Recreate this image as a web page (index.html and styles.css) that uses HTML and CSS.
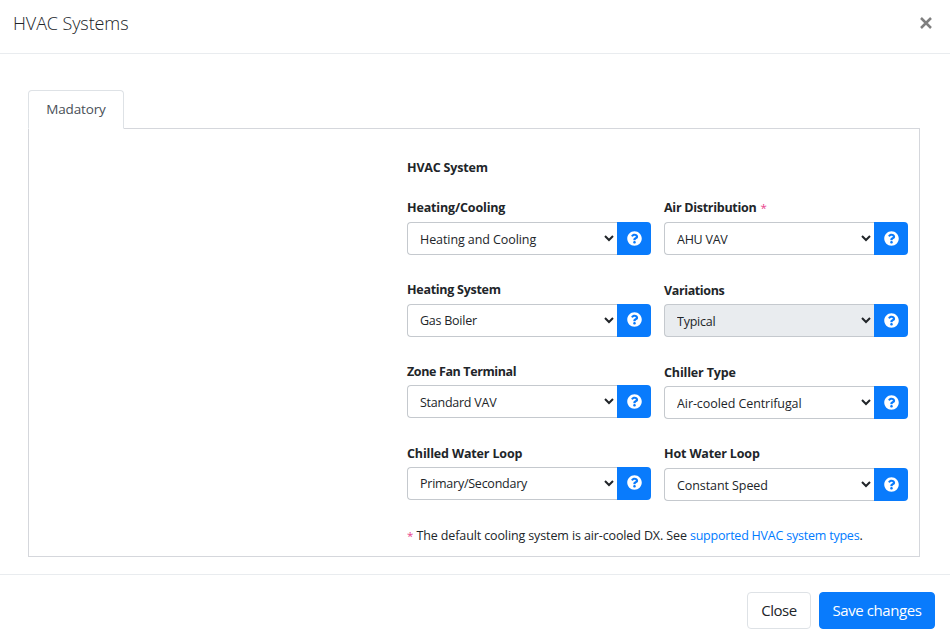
FILE: index.html
```html
<!DOCTYPE html>
<html lang="en">
<head>
<meta charset="utf-8">
<title>HVAC Systems</title>
<link rel="stylesheet" href="styles.css">
</head>
<body>
<svg class="sprite" aria-hidden="true">
  <symbol id="help" viewBox="0 0 512 512"><path d="M504 256c0 137-111 248-248 248S8 393 8 256C8 119.100 119 8 256 8s248 111.100 248 248zM262.700 90c-54.500 0-89.300 23-116.500 63.800-3.500 5.300-2.400 12.400 2.700 16.300l34.700 26.300c5.200 3.900 12.600 3 16.700-2.100 17.900-22.700 30.100-35.800 57.300-35.800 20.400 0 45.700 13.100 45.700 33 0 15-12.400 22.700-32.500 34C247.100 238.500 216 254.900 216 296v4c0 6.600 5.400 12 12 12h56c6.600 0 12-5.400 12-12v-1.300c0-28.500 83.200-29.600 83.200-106.700 0-58-60.200-102-116.500-102zM256 338c-25.400 0-46 20.600-46 46s20.600 46 46 46 46-20.600 46-46-20.600-46-46-46z"/></symbol>
</svg>
<div class="modal">
  <header class="modal-header">
    <h1 class="title">HVAC Systems</h1>
    <button class="dismiss" aria-label="Close"><svg viewBox="0 0 12 12"><path d="M1 1l10 10M11 1l-10 10"/></svg></button>
  </header>
  <main class="modal-body">
    <nav class="tabs"><a class="tab">Madatory</a></nav>
    <section class="panel">
      <div class="form">
        <h2 class="heading">HVAC System</h2>
        <div class="columns">
          <div class="column left">
            <div class="field"><label class="label loose">Heating/Cooling</label><div class="group"><select class="select wide"><option>Heating and Cooling</option></select><button class="help"><svg><use href="#help"/></svg></button></div></div>
            <div class="field"><label class="label">Heating System</label><div class="group"><select class="select"><option>Gas Boiler</option></select><button class="help"><svg><use href="#help"/></svg></button></div></div>
            <div class="field"><label class="label tight">Zone Fan Terminal</label><div class="group"><select class="select"><option>Standard VAV</option></select><button class="help"><svg><use href="#help"/></svg></button></div></div>
            <div class="field"><label class="label loose">Chilled Water Loop</label><div class="group"><select class="select"><option>Primary/Secondary</option></select><button class="help"><svg><use href="#help"/></svg></button></div></div>
          </div>
          <div class="column right">
            <div class="field"><label class="label">Air Distribution <span class="star">*</span></label><div class="group"><select class="select"><option>AHU VAV</option></select><button class="help"><svg><use href="#help"/></svg></button></div></div>
            <div class="field"><label class="label tight">Variations</label><div class="group"><select class="select muted"><option>Typical</option></select><button class="help"><svg><use href="#help"/></svg></button></div></div>
            <div class="field"><label class="label loose">Chiller Type</label><div class="group"><select class="select wide"><option>Air-cooled Centrifugal</option></select><button class="help"><svg><use href="#help"/></svg></button></div></div>
            <div class="field"><label class="label loose">Hot Water Loop</label><div class="group"><select class="select wide"><option>Constant Speed</option></select><button class="help"><svg><use href="#help"/></svg></button></div></div>
          </div>
        </div>
        <p class="note"><span class="star">*</span> The default cooling system is air-cooled DX. See <a class="link">supported HVAC system types</a>.</p>
      </div>
    </section>
  </main>
  <footer class="modal-footer">
    <button class="btn btn-light">Close</button>
    <button class="btn btn-primary">Save changes</button>
  </footer>
</div>
</body>
</html>
```
FILE: styles.css
```css
* { box-sizing: border-box; }
body { margin: 0; background: #fff; color: #212529; font-family: "Segoe UI", "Open Sans", "Noto Sans", sans-serif; font-size: 12.5px; }
button, select { font-family: inherit; }
.sprite { position: absolute; width: 0; height: 0; }
.modal { height: 641px; display: flex; flex-direction: column; overflow: hidden; }
.modal-header { height: 54px; padding: 0 17px 7px 13px; display: flex; align-items: center; justify-content: space-between; border-bottom: 1px solid #e9ecef; }
.title { margin: 0; font-size: 18px; font-weight: 300; line-height: 24px; letter-spacing: -0.1px; color: #212529; }
.dismiss { width: 14px; height: 14px; padding: 1px; border: 0; background: none; }
.dismiss svg { display: block; width: 12px; height: 12px; }
.dismiss path { fill: none; stroke: #7f7f7f; stroke-width: 2.5; }
.modal-body { height: 520px; padding: 36px 30px 0 28px; }
.tabs { display: flex; height: 39px; position: relative; z-index: 1; }
.tab { width: 96px; height: 39px; border: 1px solid #dee2e6; border-bottom-color: #fff; border-radius: 4px 4px 0 0; background: #fff; color: #495057; font-size: 13.5px; line-height: 36px; text-align: center; letter-spacing: -0.15px; }
.panel { margin-top: -1px; height: 429px; border: 1px solid #d5d7dc; padding: 29px 11px 0 378px; }
.heading { margin: 0; font-size: 12.5px; line-height: 20px; font-weight: 700; letter-spacing: -0.18px; }
.columns { display: flex; gap: 13px; margin-top: 20px; }
.column { width: 244px; }
.field { height: 82px; }
.left .field { height: 81.67px; }
.label { display: block; height: 24px; line-height: 20px; font-weight: 700; letter-spacing: -0.28px; }
.loose { letter-spacing: -0.15px; }
.tight { letter-spacing: -0.38px; }
.left .field + .field .label { padding-top: 0.6px; }
.right .field:nth-child(2) .label, .right .field:nth-child(3) .label { padding-top: 1px; }
.star { color: #e83e8c; font-weight: 400; font-size: 11.5px; letter-spacing: 0; }
.label .star { margin-left: 1px; }
.group { display: flex; height: 33px; }
.select { width: 210px; height: 33px; margin: 0; border: 1px solid #c5c9ce; border-right: 0; border-radius: 4px 0 0 4px; background: #fff; padding: 1px 0 0 8px; font-size: 12.5px; letter-spacing: -0.25px; color: #212529; }
.wide { letter-spacing: -0.08px; }
.muted { background: #e9ecef; }
.help { width: 34px; height: 33px; padding: 0 0 1px; border: 0; border-radius: 0 4px 4px 0; background: #097bfc; display: flex; align-items: center; justify-content: center; }
.help svg { width: 15px; height: 15px; fill: #fff; }
.note { margin: 0; line-height: 20px; letter-spacing: -0.12px; }
.link { color: #007bff; letter-spacing: -0.22px; }
.modal-footer { height: 67px; padding: 17px 15px 0; border-top: 1px solid #e9ecef; display: flex; justify-content: flex-end; gap: 8px; }
.btn { height: 37px; border-radius: 4px; font-size: 15px; padding: 0 0 2px; letter-spacing: -0.42px; }
.btn-light { width: 64px; border: 1px solid #dee2e6; background: #fff; color: #212529; }
.btn-primary { width: 116px; border: 1px solid #097bfc; background: #097bfc; color: #fff; }
```
